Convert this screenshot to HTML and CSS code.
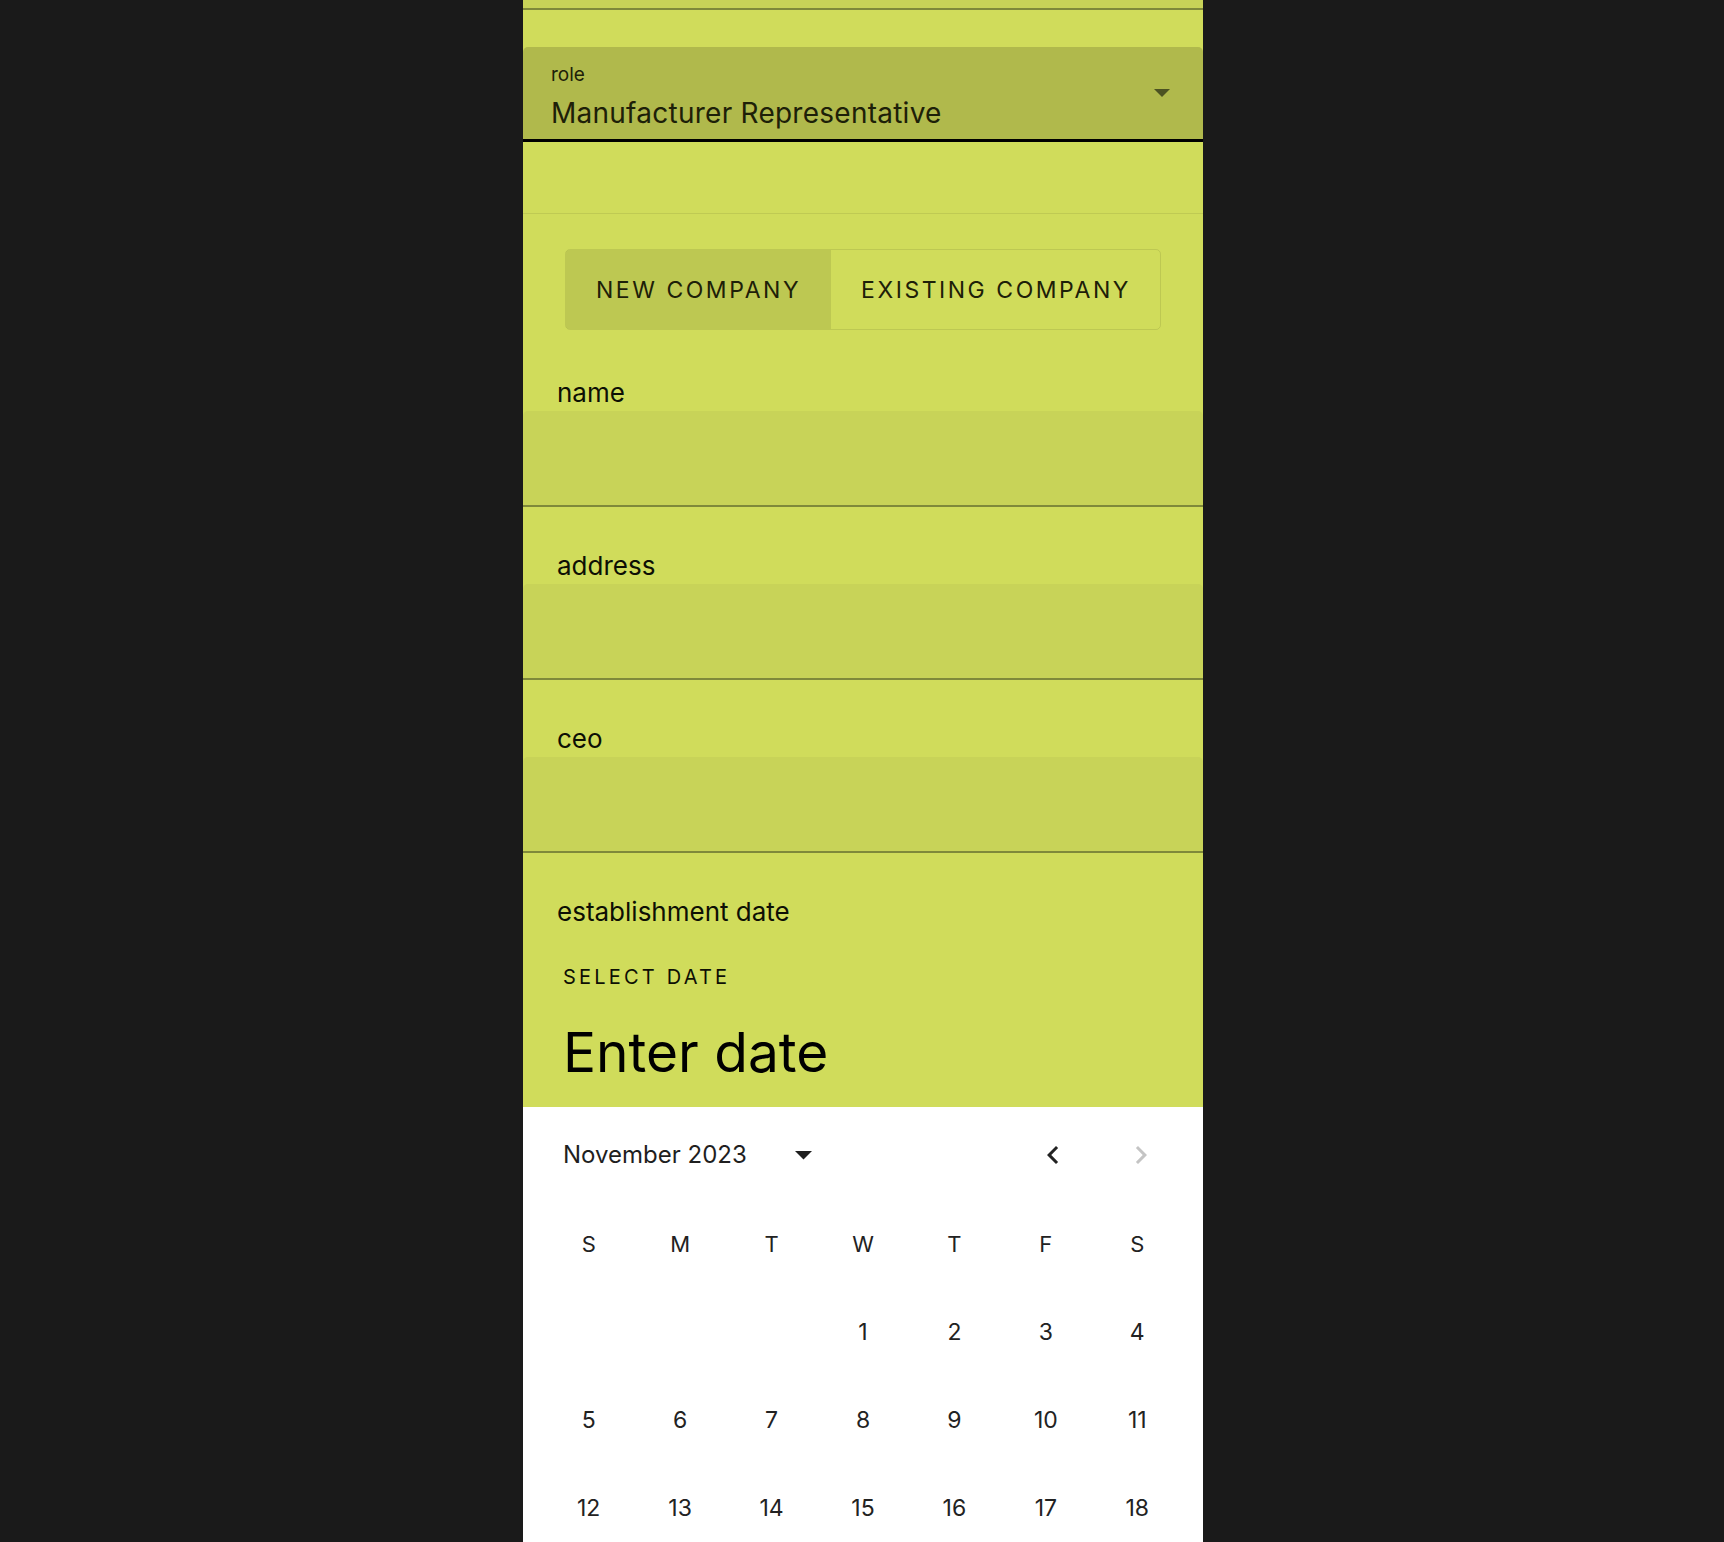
FILE: index.html
```html
<!DOCTYPE html>
<html lang="en">
<head>
<meta charset="utf-8">
<title>Company form</title>
<link rel="stylesheet" href="styles.css">
</head>
<body>
<div class="stage">
  <main class="panel">
    <div class="prev-field"></div>

    <div class="select">
      <div class="select-text">
        <div class="select-label">role</div>
        <div class="select-value">Manufacturer Representative</div>
      </div>
      <svg class="select-arrow" width="16" height="8" viewBox="0 0 16 8"><polygon points="0,0 16,0 8,8"/></svg>
    </div>

    <div class="divider"></div>

    <div class="toggle">
      <button class="toggle-btn is-selected">NEW COMPANY</button>
      <button class="toggle-btn">EXISTING COMPANY</button>
    </div>

    <div class="field">
      <label class="field-label">name</label>
      <div class="field-input"></div>
    </div>
    <div class="field">
      <label class="field-label">address</label>
      <div class="field-input"></div>
    </div>
    <div class="field">
      <label class="field-label">ceo</label>
      <div class="field-input"></div>
    </div>
    <div class="field">
      <label class="field-label date-label">establishment date</label>
      <div class="picker">
        <div class="picker-head">
          <div class="picker-overline">SELECT DATE</div>
          <div class="picker-title">Enter date</div>
        </div>
        <div class="calendar">
          <div class="cal-header">
            <span class="cal-month">November 2023</span>
            <span class="cal-switch"><svg width="17" height="9" viewBox="0 0 17 9"><polygon points="0,0 17,0 8.5,8.5"/></svg></span>
            <span class="cal-spacer"></span>
            <span class="cal-nav"><svg width="36" height="36" viewBox="0 0 24 24"><path d="M15.41 7.41 14 6l-6 6 6 6 1.41-1.41L10.83 12z"/></svg></span>
            <span class="cal-nav cal-nav-disabled"><svg width="36" height="36" viewBox="0 0 24 24"><path d="M10 6 8.59 7.41 13.17 12l-4.58 4.59L10 18l6-6z"/></svg></span>
          </div>
          <div class="cal-grid cal-week">
            <span>S</span><span>M</span><span>T</span><span>W</span><span>T</span><span>F</span><span>S</span>
          </div>
          <div class="cal-grid">
            <span></span><span></span><span></span><span>1</span><span>2</span><span>3</span><span>4</span>
          </div>
          <div class="cal-grid">
            <span>5</span><span>6</span><span>7</span><span>8</span><span>9</span><span>10</span><span>11</span>
          </div>
          <div class="cal-grid cal-last">
            <span>12</span><span>13</span><span>14</span><span>15</span><span>16</span><span>17</span><span>18</span>
          </div>
        </div>
      </div>
    </div>
  </main>
</div>
</body>
</html>
```

FILE: styles.css
```css
html, body {
  margin: 0;
  padding: 0;
  background: #1a1a1a;
  height: 100%;
  overflow: hidden;
}

.stage {
  height: 100vh;
  overflow: hidden;
  display: flex;
  justify-content: center;
  align-items: flex-start;
  padding-left: 2px;
  box-sizing: border-box;
  font-family: "Inter", "Noto Sans", sans-serif;
  color: rgba(0, 0, 0, 0.87);
}

.panel {
  width: 680px;
  min-height: 100vh;
  background: #d0dc5b;
  display: flex;
  flex-direction: column;
  flex: none;
}
.panel > * {
  flex: none;
}

.prev-field {
  height: 8px;
  background: #c8d358;
  border-bottom: 2px solid #7f893a;
}

/* select */
.select {
  margin-top: 37px;
  height: 92px;
  background: #b0b94c;
  border-radius: 5px 5px 0 0;
  border-bottom: 3px solid #000;
  display: flex;
  align-items: center;
  padding: 0 33px 0 28px;
}
.select-text {
  flex: 1;
  align-self: flex-start;
  padding-top: 18px;
}
.select-label {
  font-size: 19px;
  line-height: 20px;
  color: #1d2008;
}
.select-value {
  margin-top: 12px;
  font-size: 28px;
  line-height: 32px;
  letter-spacing: 0.25px;
  color: #1d2008;
}
.select-arrow {
  fill: #4c5222;
  display: block;
}

.divider {
  margin-top: 71px;
  height: 1px;
  background: rgba(0, 0, 0, 0.08);
}

/* toggle */
.toggle {
  margin: 35px auto 0;
  display: flex;
  border: 1px solid rgba(0, 0, 0, 0.09);
  border-radius: 5px;
  overflow: hidden;
  height: 79px;
}
.toggle-btn {
  font-family: inherit;
  font-size: 23px;
  letter-spacing: 0.11em;
  color: #1d2008;
  background: transparent;
  border: none;
  padding: 0 29px 0 30px;
  margin: 0;
  height: 79px;
  cursor: pointer;
}
.toggle-btn + .toggle-btn {
  border-left: 1px solid rgba(0, 0, 0, 0.09);
}
.toggle-btn.is-selected {
  background: rgba(0, 0, 0, 0.09);
}

/* text fields */
.field {
  display: flex;
  flex-direction: column;
  margin-top: 44px;
}
.toggle + .field {
  margin-top: 48px;
}
.field-label {
  font-size: 26px;
  line-height: 30px;
  padding-left: 34px;
  margin-bottom: 3px;
  color: #0d0f04;
}
.field-input {
  height: 94px;
  background: #c8d358;
  border-radius: 5px 5px 0 0;
  border-bottom: 2px solid #7f893a;
}
.date-label {
  margin-bottom: 5px;
}

/* date picker */
.picker {
  border-radius: 5px 5px 0 0;
  overflow: hidden;
}
.picker-head {
  height: 175px;
  box-sizing: border-box;
  padding: 33px 40px 0;
  background: #d0dc5b;
}
.picker-overline {
  font-size: 20px;
  line-height: 24px;
  letter-spacing: 0.16em;
  color: #0d0f04;
}
.picker-title {
  margin-top: 31px;
  font-size: 55px;
  line-height: 64px;
  color: #000;
}

.calendar {
  background: #fff;
  padding-top: 18px;
  color: #222;
}
.cal-header {
  height: 60px;
  display: flex;
  align-items: center;
  padding: 0 44px 0 40px;
}
.cal-month {
  font-size: 24px;
  line-height: 30px;
  color: #1f1f1f;
}
.cal-switch {
  margin-left: 48px;
  display: flex;
  fill: #1f1f1f;
}
.cal-spacer {
  flex: 1;
}
.cal-nav {
  display: flex;
  fill: #222;
}
.cal-nav + .cal-nav {
  margin-left: 52px;
}
.cal-nav-disabled {
  fill: #c4c4c4;
}

.cal-grid {
  display: grid;
  grid-template-columns: repeat(7, 1fr);
  padding: 0 20px;
  height: 88px;
  align-items: center;
  justify-items: center;
  font-size: 23px;
  line-height: 30px;
}
.cal-week {
  margin-top: 15px;
  font-size: 22px;
}
.cal-last {
  height: 78px;
  align-items: start;
  padding-top: 29px;
  box-sizing: border-box;
}
```
